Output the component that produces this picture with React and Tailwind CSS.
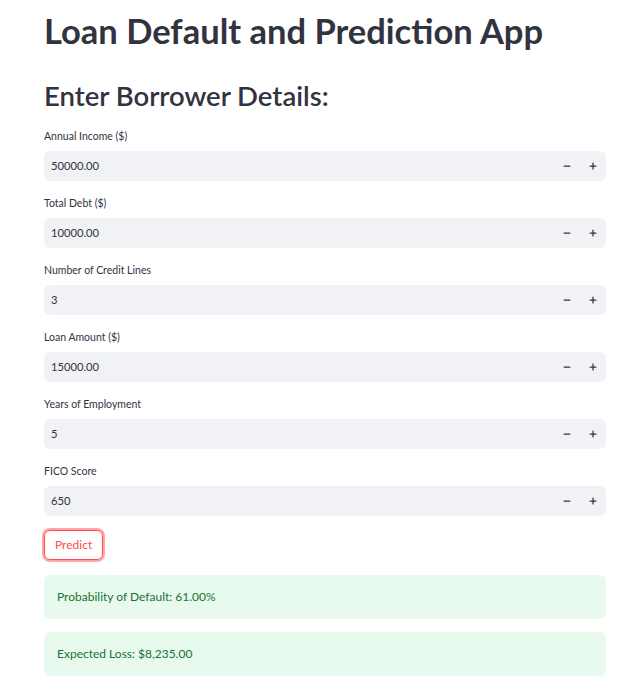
import { useState } from "react";
import { Minus, Plus } from "lucide-react";

const fields = [
  { label: "Annual Income ($)", value: "50000.00" },
  { label: "Total Debt ($)", value: "10000.00" },
  { label: "Number of Credit Lines", value: "3" },
  { label: "Loan Amount ($)", value: "15000.00" },
  { label: "Years of Employment", value: "5" },
  { label: "FICO Score", value: "650" },
];

const NumberInput = ({ label, value }) => (
  <div className="flex flex-col">
    <label className="text-[10.5px] leading-[14px] text-[#31333f] mb-[8px]">{label}</label>
    <div className="flex items-center h-[30px] rounded-[6px] bg-[#f0f2f6]">
      <span className="flex-1 pl-[7px] text-[11.2px] text-[#31333f]">{value}</span>
      <button className="w-[26px] h-full flex items-center justify-center text-[#31333f]">
        <Minus size={10} strokeWidth={3} />
      </button>
      <button className="w-[26px] h-full flex items-center justify-center text-[#31333f]">
        <Plus size={10} strokeWidth={3} />
      </button>
    </div>
  </div>
);

export default function App() {
  const [shown] = useState(true);

  return (
    <div className="min-h-screen bg-white font-[Lato,sans-serif]">
      <div className="w-[562px] ml-[44px] pt-[9px]">
        <h1 className="text-[34.5px] leading-[44px] font-bold text-[#31333f]">Loan Default and Prediction App</h1>
        <h2 className="mt-[25px] text-[27.5px] leading-[36px] font-semibold text-[#31333f]">Enter Borrower Details:</h2>

        <div className="mt-[15px] flex flex-col gap-[15px]">
          {fields.map((f) => (
            <NumberInput key={f.label} label={f.label} value={f.value} />
          ))}
        </div>

        <button className="mt-[14px] h-[30px] px-[10px] rounded-[6px] border border-[#ff4b4b] text-[#ff4b4b] text-[12px] ring-2 ring-[#ff4b4b]/50">
          Predict
        </button>

        {shown && (
          <div className="mt-[15px] flex flex-col gap-[13px]">
            <div className="h-[44px] flex items-center px-[13px] rounded-[6px] bg-[#e8f9ee] text-[#177233] text-[12px]">
              Probability of Default: 61.00%
            </div>
            <div className="h-[44px] flex items-center px-[13px] rounded-[6px] bg-[#e8f9ee] text-[#177233] text-[12px]">
              Expected Loss: $8,235.00
            </div>
          </div>
        )}
      </div>
    </div>
  );
}
